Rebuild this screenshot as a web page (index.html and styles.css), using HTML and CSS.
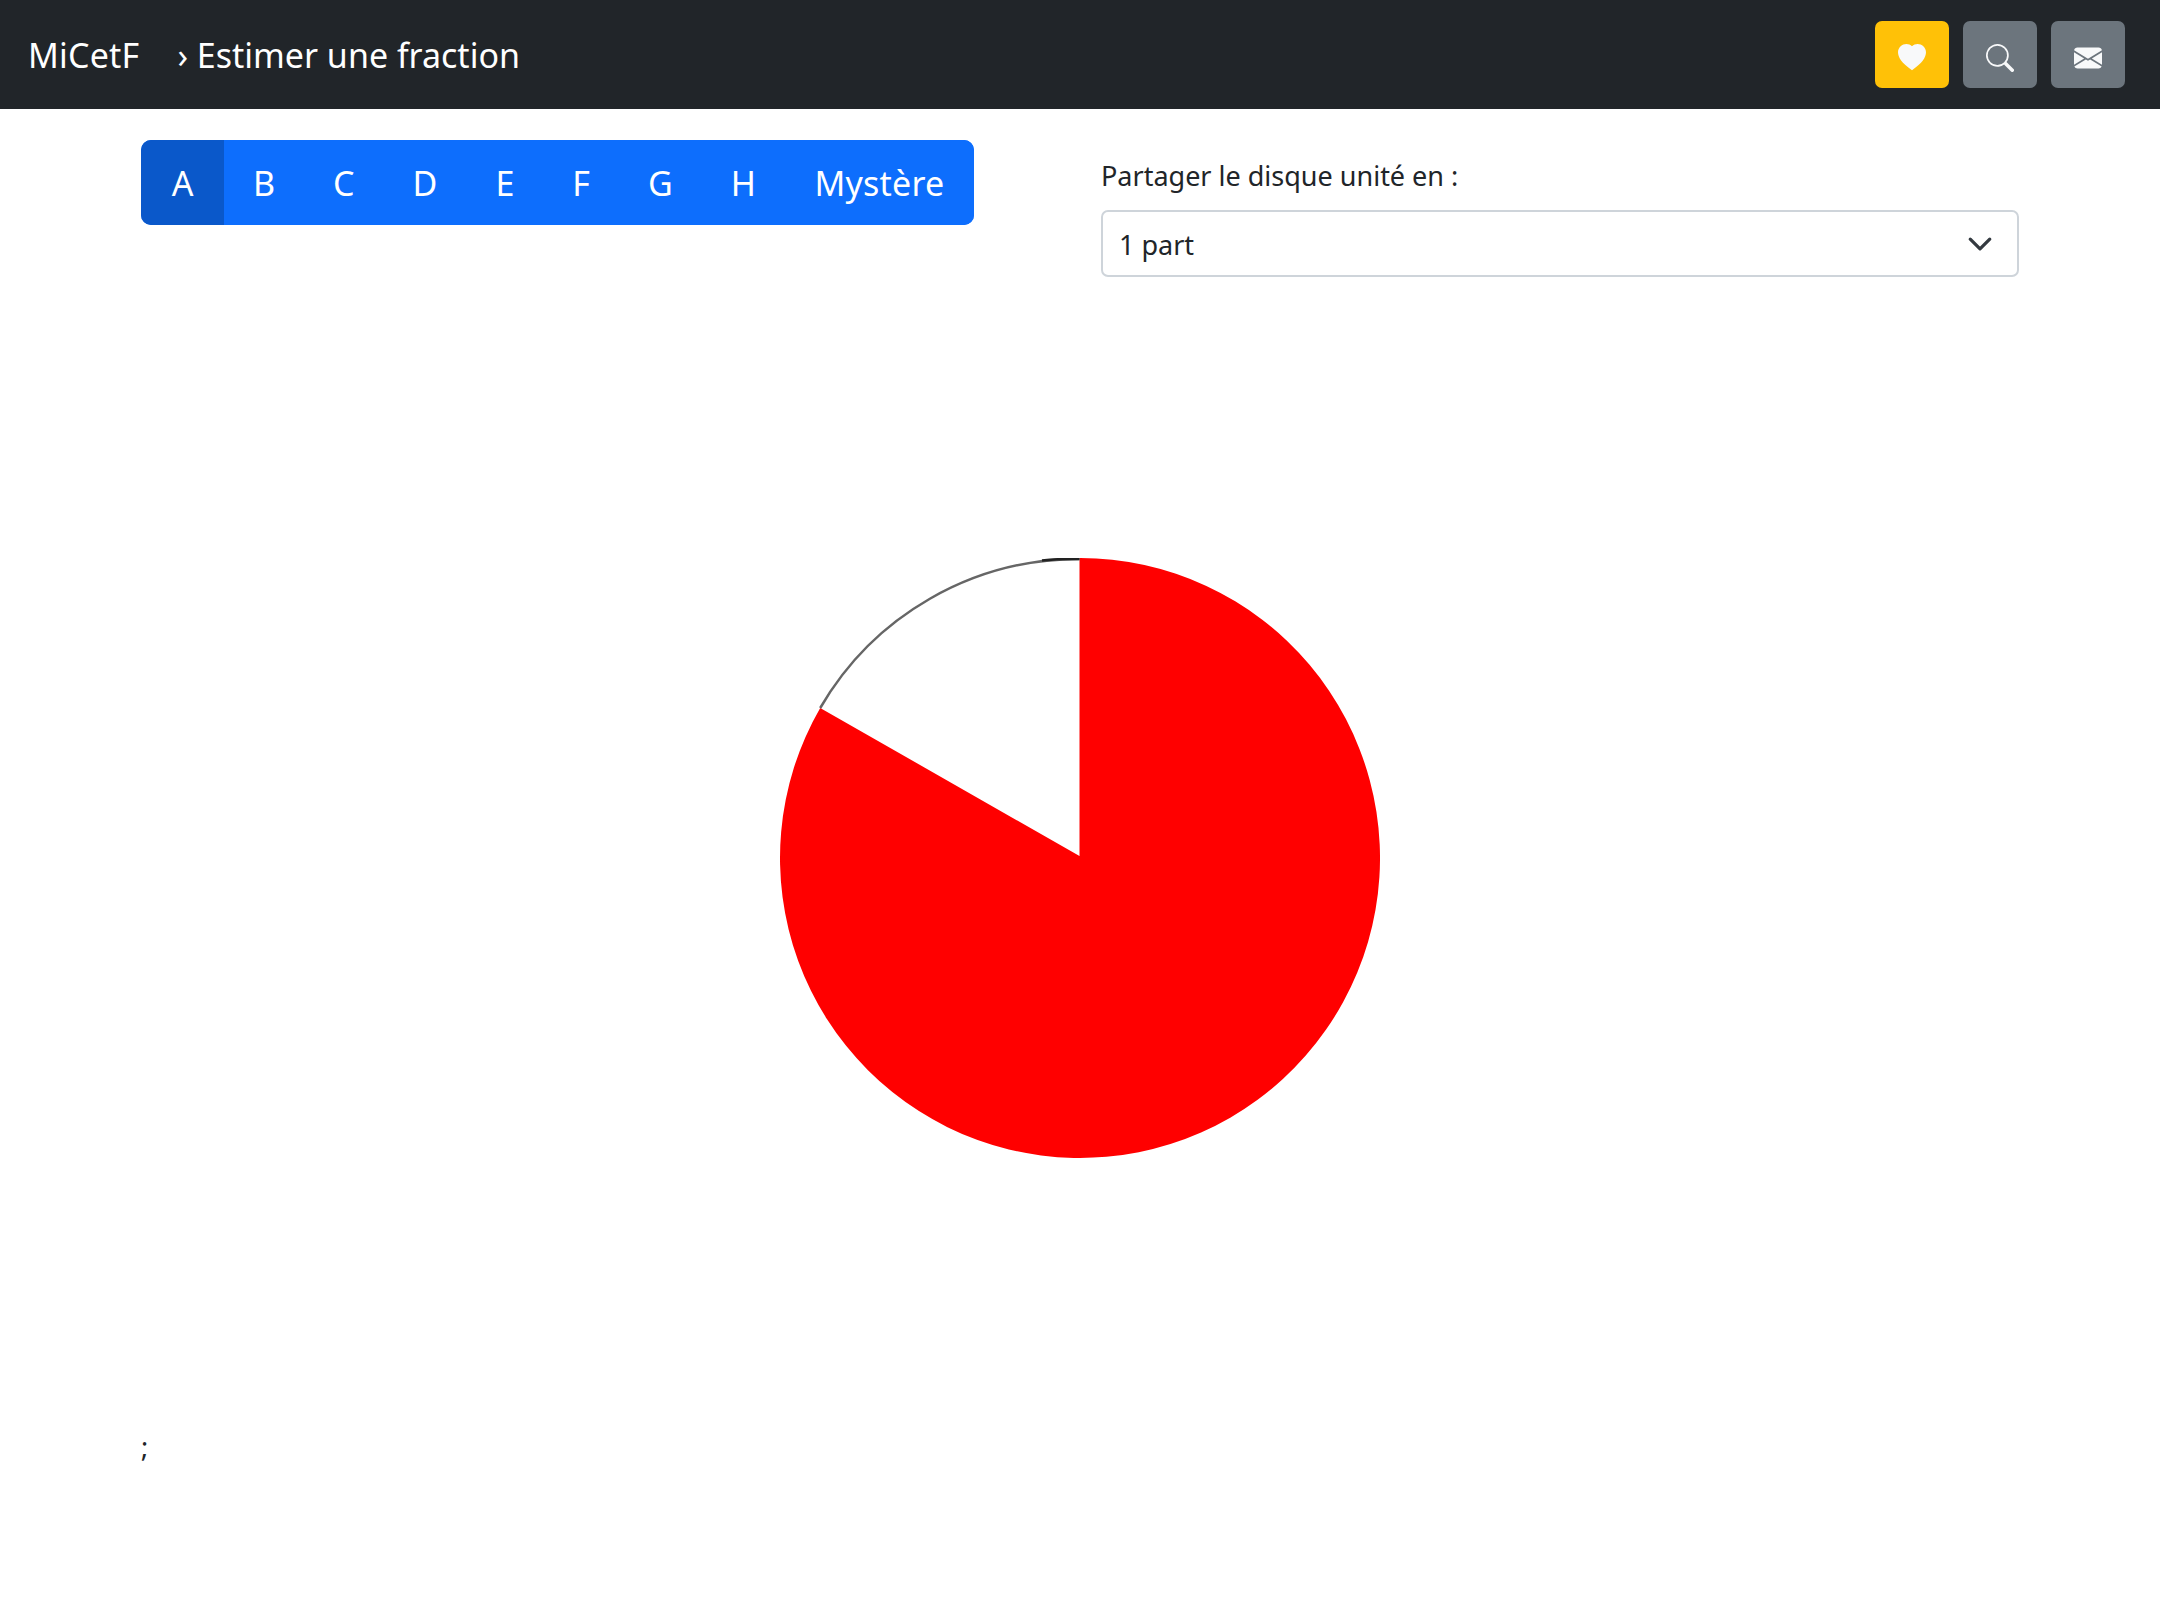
FILE: index.html
```html
<!DOCTYPE html>
<html lang="fr">
<head>
    <meta charset="UTF-8">
    <meta name="viewport" content="width=device-width, initial-scale=1.0">
    <title>Estimer une fraction</title>
    <link rel="stylesheet" href="styles.css">
</head>
<body>
    <nav class="topbar">
        <a class="brand" href="#">MiCetF</a>
        <span class="page-title">› Estimer une fraction</span>
        <div class="topbar-actions">
            <button class="icon-btn icon-btn-warning" aria-label="Favoris">
                <svg viewBox="0 0 16 16" fill="currentColor"><path fill-rule="evenodd" d="M8 1.314C12.438-3.248 23.534 4.735 8 15-7.534 4.736 3.562-3.248 8 1.314z"/></svg>
            </button>
            <button class="icon-btn icon-btn-secondary" aria-label="Rechercher">
                <svg viewBox="0 0 16 16" fill="currentColor"><path d="M11.742 10.344a6.5 6.5 0 1 0-1.397 1.398h-.001c.03.04.062.078.098.115l3.85 3.85a1 1 0 0 0 1.415-1.414l-3.85-3.85a1.007 1.007 0 0 0-.115-.1zM12 6.5a5.5 5.5 0 1 1-11 0 5.5 5.5 0 0 1 11 0z"/></svg>
            </button>
            <button class="icon-btn icon-btn-secondary" aria-label="Contact">
                <svg viewBox="0 0 16 16" fill="currentColor"><path d="M.05 3.555A2 2 0 0 1 2 2h12a2 2 0 0 1 1.95 1.555L8 8.414.05 3.555zM0 4.697v7.104l5.803-3.558L0 4.697zM6.761 8.83l-6.57 4.027A2 2 0 0 0 2 14h12a2 2 0 0 0 1.808-1.144l-6.57-4.027L8 9.586l-1.239-.757zm3.436-.586L16 11.801V4.697l-5.803 3.546z"/></svg>
            </button>
        </div>
    </nav>

    <main class="content">
        <div class="controls">
            <div class="btn-group">
                <button class="group-btn active">A</button>
                <button class="group-btn">B</button>
                <button class="group-btn">C</button>
                <button class="group-btn">D</button>
                <button class="group-btn">E</button>
                <button class="group-btn">F</button>
                <button class="group-btn">G</button>
                <button class="group-btn">H</button>
                <button class="group-btn group-btn-wide">Mystère</button>
            </div>
            <div class="parts">
                <label class="parts-label" for="parts">Partager le disque unité en :</label>
                <select class="parts-select" id="parts">
                    <option>1 part</option>
                    <option>2 parts</option>
                    <option>3 parts</option>
                    <option>4 parts</option>
                    <option>5 parts</option>
                    <option>6 parts</option>
                </select>
            </div>
        </div>

        <svg class="disk" viewBox="0 0 600 600">
            <path d="M299.5 298 L299.5 0 A300 300 0 1 1 40.2 150 Z" fill="#f00"/>
            <path d="M40.2 150 A299 299 0 0 1 299.5 1" fill="none" stroke="#666" stroke-width="2.5"/>
            <path d="M262 2.4 A299 299 0 0 1 299.5 1" fill="none" stroke="#222" stroke-width="2.5"/>
        </svg>

        <p class="tail">;</p>
    </main>
</body>
</html>
```

FILE: styles.css
```css
body {
    margin: 0;
    font-family: "Noto Sans", sans-serif;
    font-size: 27px;
    line-height: 42px;
    color: #212529;
    background-color: #fff;
}
.topbar {
    display: flex;
    align-items: center;
    height: 109px;
    padding: 0 35px 0 28px;
    background-color: #212529;
    color: #fff;
}
.brand {
    font-size: 34px;
    letter-spacing: 0.2px;
    color: #fff;
    text-decoration: none;
}
.page-title {
    font-size: 34px;
    margin-left: 38px;
}
.topbar-actions {
    display: flex;
    gap: 14px;
    margin-left: auto;
}
.icon-btn {
    display: flex;
    align-items: center;
    justify-content: center;
    width: 74px;
    height: 67px;
    padding: 6px 0 0;
    border: none;
    border-radius: 7px;
    color: #f8f9fa;
}
.icon-btn svg {
    width: 28px;
    height: 28px;
}
.icon-btn-warning {
    background-color: #ffc107;
}
.icon-btn-secondary {
    background-color: #6c757d;
}
.content {
    padding: 31px 141px 0;
}
.controls {
    display: flex;
    justify-content: space-between;
    align-items: flex-start;
}
.btn-group {
    display: flex;
    width: 833px;
    height: 85px;
    border-radius: 10px;
    overflow: hidden;
    background-color: #0d6efd;
}
.group-btn {
    flex: 1 1 auto;
    padding: 0 28px;
    border: none;
    background-color: #0d6efd;
    color: #fff;
    font-family: inherit;
    font-size: 34px;
}
.group-btn.active {
    flex: 0 0 83px;
    background-color: #0a58ca;
}
.group-btn-wide {
    flex: 0 0 189px;
    letter-spacing: 0.2px;
}
.parts {
    width: 918px;
    padding-top: 15px;
}
.parts-label {
    display: block;
    margin-bottom: 13px;
}
.parts-select {
    display: block;
    width: 100%;
    height: 67px;
    padding: 2px 63px 0 16px;
    border: 2px solid #ced4da;
    border-radius: 7px;
    appearance: none;
    font-family: inherit;
    font-size: 27px;
    color: #212529;
    background: #fff url("data:image/svg+xml,%3csvg xmlns='http://www.w3.org/2000/svg' viewBox='0 0 16 16'%3e%3cpath fill='none' stroke='%23343a40' stroke-linecap='round' stroke-linejoin='round' stroke-width='2' d='M2 5l6 6 6-6'/%3e%3c/svg%3e") no-repeat right 24px center / 26px 26px;
}
.disk {
    display: block;
    width: 600px;
    height: 600px;
    margin: 281px auto 0;
}
.tail {
    margin: 268px 0 0;
}
```
